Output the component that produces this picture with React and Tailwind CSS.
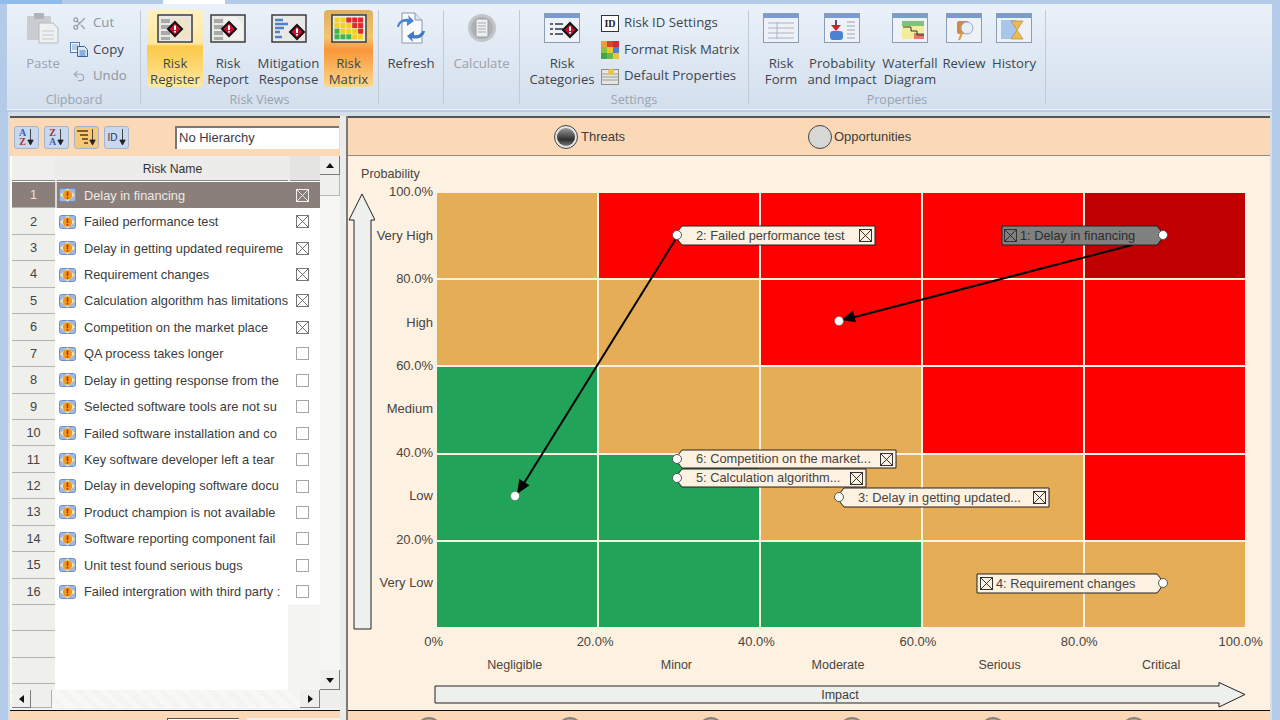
import { Scissors, Undo2 } from "lucide-react";

// names as the grid shows them, it cuts long ones off at the column edge
const risks = [
  "Delay in financing",
  "Failed performance test",
  "Delay in getting updated requireme",
  "Requirement changes",
  "Calculation algorithm has limitations",
  "Competition on the market place",
  "QA process takes longer",
  "Delay in getting response from the",
  "Selected software tools are not su",
  "Failed software installation and co",
  "Key software developer left a tear",
  "Delay in developing software docu",
  "Product champion is not available",
  "Software reporting component fail",
  "Unit test found serious bugs",
  "Failed intergration with third party :",
];

const O = "bg-[#e5ad55]";
const R = "bg-[#ff0000]";
const D = "bg-[#c00000]";
const G = "bg-[#21a35a]";
const cells = [
  O, R, R, R, D,
  O, O, R, R, R,
  G, O, O, R, R,
  G, G, O, O, R,
  G, G, G, O, O,
];

const yLabels = ["100.0%", "Very High", "80.0%", "High", "60.0%", "Medium", "40.0%", "Low", "20.0%", "Very Low"];
const xPercents = ["0%", "20.0%", "40.0%", "60.0%", "80.0%", "100.0%"];
const xLabels = ["Negligible", "Minor", "Moderate", "Serious", "Critical"];

function Diamond({ x, y, r = 7 }) {
  return (
    <g>
      <polygon points={`${x},${y - r} ${x + r},${y} ${x},${y + r} ${x - r},${y}`} fill="#c8102e" stroke="#111" strokeWidth="2" />
      <rect x={x - 1} y={y - 3.5} width="2" height="4.5" fill="#fff" />
      <rect x={x - 1} y={y + 2} width="2" height="1.5" fill="#fff" />
    </g>
  );
}

function BoxIcon({ children }) {
  return (
    <svg width="36" height="29" viewBox="0 0 36 29">
      <rect x="1" y="1" width="34" height="27" fill="#e8e8e6" stroke="#3c3c3c" strokeWidth="1.5" />
      {children}
    </svg>
  );
}

function WinIcon({ children }) {
  return (
    <svg width="36" height="30" viewBox="0 0 36 30">
      <rect x="0.5" y="0.5" width="35" height="29" fill="#eef2f7" stroke="#8b9db5" />
      <rect x="1" y="1" width="34" height="4" fill="#7a9bd0" />
      {children}
    </svg>
  );
}

function TableLines() {
  return (
    <g fill="#a9a9a5">
      <rect x="4" y="5" width="9" height="4" />
      <rect x="4" y="11" width="9" height="4" />
      <rect x="4" y="17" width="9" height="4" />
      <rect x="4" y="23" width="9" height="3" />
    </g>
  );
}

function PasteIcon() {
  return (
    <svg width="34" height="32" viewBox="0 0 34 32">
      <rect x="1" y="4" width="24" height="24" rx="1" fill="#c9cdd1" />
      <rect x="8" y="1" width="10" height="6" rx="1" fill="#b0b4b8" />
      <path d="M13 11h14l5 5v15H13z" fill="#eef0f2" stroke="#b5b9bd" />
      <path d="M16 19h12M16 23h12M16 27h12" stroke="#c7cbcf" />
    </svg>
  );
}

function CopyIcon() {
  return (
    <svg width="18" height="15" viewBox="0 0 18 15">
      <rect x="0.5" y="0.5" width="9" height="10" fill="#f4f7fb" stroke="#4f7fbe" />
      <path d="M2 3h6M2 5h6M2 7h6" stroke="#7ba0d0" />
      <path d="M7.5 4.5h7l3 3v7h-10z" fill="#dbe7f6" stroke="#2f63aa" />
      <path d="M9.5 9h6M9.5 11h6M9.5 13h6" stroke="#3f78c6" />
    </svg>
  );
}

function RefreshIcon() {
  return (
    <svg width="32" height="32" viewBox="0 0 32 32">
      <path d="M7 1h13l7 7v23H7z" fill="#f7f9fb" stroke="#8b98a8" />
      <path d="M20 1v7h7" fill="#dfe6ee" stroke="#8b98a8" />
      <path d="M2 15c1-6 6-9 12-8l-1-4 6 6-7 5 0-4c-4-1-7 1-8 5z" fill="#4a83cf" />
      <path d="M30 19c-1 6-7 9-13 7l1 4-6-6 7-5 0 4c4 1 7-1 8-4z" fill="#3f78c6" />
    </svg>
  );
}

function CalcIcon() {
  return (
    <svg width="30" height="30" viewBox="0 0 30 30">
      <circle cx="15" cy="15" r="14" fill="#c3c6c8" />
      <circle cx="15" cy="15" r="11" fill="#aeb2b5" />
      <rect x="9" y="6" width="12" height="18" rx="1" fill="#eceeef" stroke="#9a9ea2" />
      <path d="M11 10h8M11 13h8M11 16h8M11 19h8" stroke="#a8acb0" />
    </svg>
  );
}

function MatrixIcon() {
  const colors = ["#f2d21b", "#f2d21b", "#e2262e", "#e2262e", "#e2262e", "#f2d21b", "#f2d21b", "#f2d21b", "#e2262e", "#e2262e", "#3fb54a", "#f2d21b", "#f2d21b", "#f2d21b", "#e2262e", "#3fb54a", "#3fb54a", "#3fb54a", "#f2d21b", "#f2d21b"];
  return (
    <BoxIcon>
      {colors.map((c, i) => (
        <rect key={i} x={3.5 + (i % 5) * 5.9} y={3.5 + Math.floor(i / 5) * 5.6} width="5" height="5" fill={c} />
      ))}
    </BoxIcon>
  );
}

function RibbonButton({ label, label2, icon, width, tone, muted }) {
  let bg = "";
  if (tone === "yellow") bg = "bg-[linear-gradient(#fff1c0,#fde7a4_44%,#fcc94a_47%,#fdd873_75%,#fdeaa8)] rounded-sm";
  if (tone === "orange") bg = "bg-[linear-gradient(#dfae5e,#f3c672_35%,#f9963a_52%,#fdd88a)] rounded-sm";
  return (
    <div className={`${width} h-[77px] flex flex-col items-center shrink-0 ${bg}`}>
      <div className="h-[36px] flex items-center justify-center">{icon}</div>
      <div className={`mt-[9px] text-center text-[13.2px] leading-[16px] whitespace-nowrap ${muted ? "text-[#9aa2aa]" : "text-[#3d4650]"}`}>
        <div>{label}</div>
        {label2 && <div>{label2}</div>}
      </div>
    </div>
  );
}

function SmallItem({ icon, label, muted }) {
  return (
    <div className="h-[26.5px] flex items-center gap-1 whitespace-nowrap">
      <div className="w-[20px] flex justify-center">{icon}</div>
      <span className={`text-[13.2px] ${muted ? "text-[#8d959d]" : "text-[#3d4650]"}`}>{label}</span>
    </div>
  );
}

function RibbonGroup({ title, width, children }) {
  return (
    <div className={`${width} h-[94px] shrink-0 flex flex-col border-r border-[#c0cbd8]`}>
      <div className="h-[77px] flex justify-center">{children}</div>
      <div className="mt-[5px] text-center text-[12.5px] leading-[16px] text-[#98a4b2] whitespace-nowrap">{title}</div>
    </div>
  );
}

function Ribbon() {
  return (
    <div className="h-[112px] shrink-0 flex flex-col">
      <div className="h-[4px] flex bg-[#b3cbe6]">
        <div className="w-[62px] bg-[#8ebcec]" />
        <div className="w-[101px]" />
        <div className="w-[62px] bg-white" />
      </div>
      <div className="h-[106px] ml-[7px] mr-[8px] pt-[6px] pl-[1px] flex bg-[linear-gradient(#eaf1f9,#d3dfed)] border-b border-[#f2f6fa]">
        <RibbonGroup title="Clipboard" width="w-[133px]">
          <div className="flex pl-[8px] w-full">
            <RibbonButton width="w-[54px]" label="Paste" muted icon={<PasteIcon />} />
            <div className="ml-[-1px]">
              <SmallItem muted label="Cut" icon={<Scissors size={15} className="text-[#9a9ea3]" />} />
              <SmallItem label="Copy" icon={<CopyIcon />} />
              <SmallItem muted label="Undo" icon={<Undo2 size={14} className="text-[#9aa8b8]" />} />
            </div>
          </div>
        </RibbonGroup>
        <RibbonGroup title="Risk Views" width="w-[238px]">
          <div className="flex items-start pl-[6px] w-full">
            <RibbonButton width="w-[56px]" tone="yellow" label="Risk" label2="Register" icon={<BoxIcon><TableLines /><rect x="14" y="4" width="19" height="21" fill="#efe4c9" /><Diamond x={18} y={15} /></BoxIcon>} />
            <RibbonButton width="w-[50px]" label="Risk" label2="Report" icon={<BoxIcon><TableLines /><path d="M14 3h12l7 7v16H14z" fill="#f2f2f0" /><Diamond x={19} y={15} /></BoxIcon>} />
            <RibbonButton width="w-[71px]" label="Mitigation" label2="Response" icon={<BoxIcon><path d="M4 6h8M4 10h13M4 14h9M4 18h5M4 23h7" stroke="#4f82c8" strokeWidth="2.5" /><Diamond x={26} y={18} /></BoxIcon>} />
            <RibbonButton width="w-[49px]" tone="orange" label="Risk" label2="Matrix" icon={<MatrixIcon />} />
          </div>
        </RibbonGroup>
        <RibbonGroup title="" width="w-[65px]">
          <RibbonButton width="w-[60px]" label="Refresh" icon={<RefreshIcon />} />
        </RibbonGroup>
        <RibbonGroup title="" width="w-[76px]">
          <RibbonButton width="w-[70px]" muted label="Calculate" icon={<CalcIcon />} />
        </RibbonGroup>
        <RibbonGroup title="Settings" width="w-[229px]">
          <div className="flex pl-[12px] w-full">
            <RibbonButton width="w-[60px]" label="Risk" label2="Categories" icon={<WinIcon><path d="M6 11h3M11 11h8M6 16h3M11 16h8M6 21h3M11 21h8" stroke="#5c6670" strokeWidth="2" /><Diamond x={26} y={17} /></WinIcon>} />
            <div className="pl-[8px]">
              <SmallItem label="Risk ID Settings" icon={<div className="w-[18px] h-[17px] border border-[#333] bg-white flex items-center justify-center text-[10px] font-bold font-['Liberation_Serif',serif] text-[#222]">ID</div>} />
              <SmallItem label="Format Risk Matrix" icon={<svg width="18" height="18" viewBox="0 0 18 18"><rect width="6" height="6" fill="#e9a13b" /><rect x="6" width="6" height="6" fill="#d8452e" /><rect x="12" width="6" height="6" fill="#c92f3a" /><rect y="6" width="6" height="6" fill="#8fbf3f" /><rect x="6" y="6" width="6" height="6" fill="#e8c53a" /><rect x="12" y="6" width="6" height="6" fill="#4f82c8" /><rect y="12" width="6" height="6" fill="#3fa64a" /><rect x="6" y="12" width="6" height="6" fill="#6cb64a" /><rect x="12" y="12" width="6" height="6" fill="#e8c53a" /></svg>} />
              <SmallItem label="Default Properties" icon={<svg width="18" height="18" viewBox="0 0 18 18"><rect x="0.5" y="2.5" width="17" height="15" fill="#e5e5e2" stroke="#8e8e8a" /><path d="M1 7h16M1 10h16M1 13h16" stroke="#9a9a96" /><circle cx="10" cy="5" r="3" fill="#f0c43c" /></svg>} />
            </div>
          </div>
        </RibbonGroup>
        <RibbonGroup title="Properties" width="w-[297px]">
          <div className="flex items-start w-full">
            <RibbonButton width="w-[64px]" label="Risk" label2="Form" icon={<WinIcon><path d="M5 10h26M5 15h26M5 20h26M5 25h26M14 9v17" stroke="#a8b5c6" /></WinIcon>} />
            <RibbonButton width="w-[58px]" label="Probability" label2="and Impact" icon={<WinIcon><path d="M12 7v7" stroke="#222" strokeWidth="1.5" /><polygon points="7,12 17,12 12,18" fill="#c8242c" /><rect x="6" y="18" width="13" height="9" rx="3" fill="#4a83cf" /><path d="M23 9h8M23 13h8M23 17h8M23 21h8M23 25h8" stroke="#9aa4b0" /></WinIcon>} />
            <RibbonButton width="w-[78px]" label="Waterfall" label2="Diagram" icon={<WinIcon><rect x="10" y="8" width="22" height="18" fill="#f4ec9c" /><rect x="10" y="8" width="22" height="5" fill="#7fc46f" /><rect x="22" y="20" width="10" height="6" fill="#e47b6c" /><path d="M11 14h8v4h6v4h7" fill="none" stroke="#333" /></WinIcon>} />
            <RibbonButton width="w-[30px]" label="Review" icon={<WinIcon><rect x="11" y="8" width="12" height="13" rx="2" fill="#cf8a4b" /><circle cx="21" cy="15" r="6" fill="#e6eef6" stroke="#9aa8b8" /><path d="M16 20l-3 7" stroke="#d9a441" strokeWidth="2" /></WinIcon>} />
            <RibbonButton width="w-[70px]" label="History" icon={<WinIcon><rect x="5" y="7" width="15" height="19" fill="#a7c6ea" /><path d="M15 8h12l-6 9 6 9H15l6-9z" fill="#eebb4d" stroke="#b38a3a" strokeWidth="0.7" /></WinIcon>} />
          </div>
        </RibbonGroup>
      </div>
    </div>
  );
}

function XBox({ checked, tone = "gray" }) {
  const colors = {
    gray: { box: checked ? "border-[#777]" : "border-[#a5a5a5]", stroke: "#666" },
    dark: { box: "border-[#333]", stroke: "#222" },
    light: { box: "border-[#f2f2f2]", stroke: "#f2f2f2" },
  };
  return (
    <div className={`w-[13px] h-[13px] shrink-0 border ${colors[tone].box}`}>
      {checked && (
        <svg viewBox="0 0 12 12" className="w-full h-full block">
          <path d="M0 0L12 12M12 0L0 12" stroke={colors[tone].stroke} strokeWidth="1" />
        </svg>
      )}
    </div>
  );
}

function RiskIcon() {
  return (
    <svg width="17" height="14" viewBox="0 0 17 14" className="shrink-0">
      <rect x="0.5" y="0.5" width="16" height="13" rx="2" fill="#9db8e4" stroke="#6f8fc6" />
      <polygon points="8.5,0.5 16,7 8.5,13.5 1,7" fill="#f8ecb8" />
      <circle cx="8.5" cy="7" r="4.8" fill="#f09a1c" />
      <rect x="7.7" y="3.5" width="1.6" height="4.5" fill="#c0261d" />
      <rect x="7.7" y="9" width="1.6" height="1.6" fill="#c0261d" />
    </svg>
  );
}

function SortButton({ children, tone }) {
  return (
    <div className={`w-[25px] h-[23px] rounded-[3px] border border-[#a4b4cb] flex items-center justify-center gap-[1px] ${tone === "orange" ? "bg-[#f7c878]" : "bg-[#c8d8ee]"}`}>
      {children}
      <svg width="7" height="17" viewBox="0 0 7 17"><path d="M3.5 0v15M0.8 11l2.7 5 2.7-5z" stroke="#222" fill="#222" strokeWidth="0.8" /></svg>
    </div>
  );
}

function Letters({ a, b, ca, cb }) {
  return (
    <div className="flex flex-col items-center font-['Liberation_Serif',serif] font-bold text-[10px] leading-[9px]">
      <span className={ca}>{a}</span>
      <span className={cb}>{b}</span>
    </div>
  );
}

function ScrollBtn({ dir, className }) {
  const shapes = {
    up: "M0 5L4 0L8 5z",
    down: "M0 0L8 0L4 5z",
    left: "M5 0L5 8L0 4z",
    right: "M0 0L5 4L0 8z",
  };
  return (
    <div className={`bg-[#efefed] border-r border-b border-[#7d7d7d] flex items-center justify-center ${className}`}>
      <svg width="8" height="8" viewBox="0 0 8 8"><path d={shapes[dir]} fill="#111" transform={dir === "up" || dir === "down" ? "translate(0 2)" : "translate(2 0)"} /></svg>
    </div>
  );
}

function RiskList() {
  const blanks = [0, 1, 2];
  return (
    <div className="w-[330px] shrink-0 flex flex-col">
      <div className="h-[2px] bg-[#555]" />
      <div className="h-[38px] bg-[#fbd9b7] flex items-center pl-[4px] gap-[5px]">
        <SortButton><Letters a="A" b="Z" ca="text-[#3b63b5]" cb="text-[#b03030]" /></SortButton>
        <SortButton><Letters a="Z" b="A" ca="text-[#b03030]" cb="text-[#3b63b5]" /></SortButton>
        <SortButton tone="orange">
          <svg width="11" height="14" viewBox="0 0 11 14"><path d="M0 1h11M3 5h8M5 9h6M7 13h4" stroke="#7a6030" strokeWidth="2" /></svg>
        </SortButton>
        <SortButton><span className="text-[10px] text-[#26364f]">ID</span></SortButton>
        <div className="ml-[41px] w-[164px] h-[23px] bg-white border-l-2 border-t-2 border-[#777] flex items-center pl-[2px] text-[13px] text-[#3c3c3c]">No Hierarchy</div>
      </div>
      <div className="flex pl-[2px] h-[534px] bg-[#fdfdfc]">
        <div className="w-[308px] flex flex-col">
          <div className="h-[25px] flex bg-[#ececea] text-[12.2px] text-[#333] mb-[1px] gap-[2px]">
            <div className="w-[43px] border-b border-[#8a8a8a] bg-[#efefed]" />
            <div className="flex-1 pt-[2px] border-b border-[#8a8a8a] flex items-center justify-center">Risk Name</div>
            <div className="w-[30px] border-b border-[#8a8a8a] bg-[#e4e4e2]" />
          </div>
          {risks.map((name, i) => (
            <div key={i} className="flex h-[26.45px] shrink-0 text-[12.8px]">
              <div className={`w-[43px] flex items-center justify-center border-b border-[#b4b4b0] ${i === 0 ? "bg-[#8a7f7b] text-[#e6e2df]" : "bg-[#efefec] text-[#444]"}`}>{i + 1}</div>
              <div className={`w-[2px] ${i === 0 ? "bg-[#d8d8d6]" : "bg-[#fdfdfc]"}`} />
              <div className={`w-[231px] pl-[2px] flex items-center gap-[8px] whitespace-nowrap ${i === 0 ? "bg-[#8a7f7b] text-[#ece9e6]" : "bg-white text-[#3c3c3c]"}`}>
                <RiskIcon />
                <span className="w-[204px]">{name}</span>
              </div>
              <div className={`w-[32px] pr-[3px] flex items-center justify-center ${i === 0 ? "bg-[#8a7f7b]" : "bg-white"}`}>
                <XBox checked={i < 6} tone={i === 0 ? "light" : "gray"} />
              </div>
            </div>
          ))}
          {blanks.map((b) => (
            <div key={b} className="flex h-[26.45px] shrink-0">
              <div className="w-[43px] bg-[#efefec] border-b border-[#b4b4b0]" />
              <div className="w-[233px] bg-white" />
              <div className="w-[32px] bg-[#f4f4f3]" />
            </div>
          ))}
          <div className="flex-1 flex">
            <div className="w-[43px] bg-[#efefec]" />
            <div className="w-[233px] bg-white" />
            <div className="w-[32px] bg-[#f4f4f3]" />
          </div>
        </div>
        <div className="w-[20px] bg-[#f6f6f5] flex flex-col">
          <ScrollBtn dir="up" className="h-[19px]" />
          <div className="h-[21px] bg-[#efefed] border-b border-r border-[#b8b8b6]" />
          <div className="flex-1" />
          <ScrollBtn dir="down" className="h-[20px]" />
        </div>
      </div>
      <div className="h-[18px] flex pl-[2px] bg-[repeating-linear-gradient(45deg,#f1f1f0_0px,#f1f1f0_1px,#fbfbfa_1px,#fbfbfa_2px)]">
        <ScrollBtn dir="left" className="w-[19px]" />
        <div className="w-[21px] bg-[#efefed] border-r border-b border-[#b0b0ae]" />
        <div className="flex-1" />
        <ScrollBtn dir="right" className="w-[20px]" />
        <div className="w-[20px] bg-[#eeeeec]" />
      </div>
      <div className="h-[2px] bg-[#f2f2f0]" />
      <div className="h-[10px] border-t border-[#111] bg-[#fbd9b7] flex items-end pl-[157px] gap-[8px]">
        <div className="w-[72px] h-[2px] bg-white border-t border-l border-[#555]" />
        <div className="w-[93px] h-[2px] bg-[#eef2f2]" />
      </div>
    </div>
  );
}

function Overlay() {
  const dots = [[726, 42], [240, 42], [240, 266], [240, 285], [402, 304], [726, 390], [402, 128], [78, 303]];
  const shapes = [
    { points: "565,33 720,33 724,38 724,47 720,52 565,52", fill: "#808080" },
    { points: "245,33 438,33 438,52 245,52 241,47 241,38", fill: "#fdf1e1" },
    { points: "245,257 459,257 459,275 245,275 241,270 241,262", fill: "#fdf1e1" },
    { points: "245,276 429,276 429,294 245,294 241,289 241,281", fill: "#fdf1e1" },
    { points: "407,295 612,295 612,314 407,314 403,309 403,300", fill: "#fdf1e1" },
    { points: "540,381 720,381 724,386 724,395 720,400 540,400", fill: "#fdf1e1" },
  ];
  return (
    <svg width="808" height="434" viewBox="0 0 808 434" className="absolute left-0 top-0 overflow-visible">
      <path d="M695 52L410 126" stroke="#000" strokeWidth="2" />
      <polygon points="404,127 419,129.3 416,117.7" fill="#000" />
      <path d="M240 44L84 295" stroke="#000" strokeWidth="2" />
      <polygon points="80,301 92.5,292.3 82.3,285.9" fill="#000" />
      {shapes.map((s, i) => (
        <polygon key={i} points={s.points} fill={s.fill} stroke="#222" />
      ))}
      {dots.map(([x, y], i) => (
        <circle key={i} cx={x} cy={y} r="4.5" fill="#fff" stroke="#555" strokeWidth={i > 5 ? 0.5 : 1} />
      ))}
    </svg>
  );
}

function MarkerText({ pos, text }) {
  return (
    <div className={`absolute flex items-center justify-between text-[12.8px] text-[#444] whitespace-nowrap ${pos}`}>
      {text}
      <XBox checked tone="dark" />
    </div>
  );
}

function MarkerTextLeft({ pos, text, dark }) {
  return (
    <div className={`absolute flex items-center gap-[3px] text-[12.8px] whitespace-nowrap ${pos} ${dark ? "text-[#2c2c2c]" : "text-[#444]"}`}>
      <XBox checked tone="dark" />
      {text}
    </div>
  );
}

function Matrix() {
  return (
    <div className="relative w-[808px] h-[434px]">
      <div className="grid grid-cols-5 grid-rows-5 gap-[2px] w-full h-full">
        {cells.map((c, i) => (
          <div key={i} className={c} />
        ))}
      </div>
      <Overlay />
      <MarkerTextLeft pos="left-[567px] top-[33px] h-[19px]" text="1: Delay in financing" dark />
      <MarkerText pos="left-[259px] top-[33px] h-[19px] w-[176px]" text="2: Failed performance test" />
      <MarkerText pos="left-[259px] top-[257px] h-[18px] w-[197px]" text="6: Competition on the market..." />
      <MarkerText pos="left-[259px] top-[276px] h-[18px] w-[167px]" text="5: Calculation algorithm..." />
      <MarkerText pos="left-[421px] top-[295px] h-[19px] w-[188px]" text="3: Delay in getting updated..." />
      <MarkerTextLeft pos="left-[543px] top-[381px] h-[19px]" text="4: Requirement changes" />
    </div>
  );
}

function ChartPane() {
  const radios = [0, 1, 2, 3, 4, 5];
  return (
    <div className="flex-1 min-w-0 flex flex-col border-l-2 border-[#7b7b7b] text-[13px] text-[#4a4440]">
      <div className="h-[2px] bg-[#555]" />
      <div className="h-[38px] bg-[#fbd9b7] border-b border-[#8f8a82] flex items-center text-[#3c3c3c]">
        <div className="ml-[206px] w-[254px] flex items-center gap-[3px]">
          <div className="w-[24px] h-[24px] rounded-full border border-[#444] p-[2px] bg-[#e4e4e2]">
            <div className="w-full h-full rounded-full bg-[linear-gradient(#9a9a9a,#2e2e2e_65%,#777)]" />
          </div>
          <span>Threats</span>
        </div>
        <div className="flex items-center gap-[2px]">
          <div className="w-[24px] h-[24px] rounded-full border border-[#444] bg-[#d8d8d6]" />
          <span>Opportunities</span>
        </div>
      </div>
      <div className="h-[554px] bg-[#fdf1e1] flex flex-col">
        <div className="h-[37px] pl-[13px] pt-[10px] leading-[16px] text-[12.6px]">Probability</div>
        <div className="flex h-[434px]">
          <svg width="27" height="438" viewBox="0 0 27 438" className="shrink-0">
            <path d="M14 1L27 27H23V436H6V27H1z" fill="#eef0ee" stroke="#222" strokeWidth="1" />
          </svg>
          <div className="w-[58px] flex flex-col mt-[-22.5px] shrink-0">
            {yLabels.map((t) => (
              <div key={t} className="h-[43.4px] shrink-0 flex items-center justify-end whitespace-nowrap">{t}</div>
            ))}
          </div>
          <div className="ml-[4px]">
            <Matrix />
          </div>
        </div>
        <div className="flex mt-[7px] h-[16px] ml-[5px]">
          {xPercents.map((t) => (
            <div key={t} className="w-[161.4px] shrink-0 text-center leading-[16px]">{t}</div>
          ))}
        </div>
        <div className="flex mt-[7px] h-[16px] ml-[86px] text-[12.5px]">
          {xLabels.map((t) => (
            <div key={t} className="w-[161.6px] shrink-0 text-center leading-[16px]">{t}</div>
          ))}
        </div>
        <div className="relative mt-[9px] ml-[86px] w-[812px] h-[26px]">
          <svg width="812" height="26" viewBox="0 0 812 26" className="absolute left-0 top-0">
            <path d="M1 4H785V0.5L811 12.5L785 25V21H1z" fill="#eef0ee" stroke="#222" strokeWidth="1" />
          </svg>
          <div className="absolute inset-0 flex items-center justify-center text-[12.5px] text-[#3c3c3c]">Impact</div>
        </div>
      </div>
      <div className="h-[10px] border-t border-[#111] bg-[#fbd9b7] overflow-hidden flex pl-[68px] gap-[115px]">
        {radios.map((r) => (
          <div key={r} className="w-[26px] h-[26px] rounded-full shrink-0 mt-[6px] border-2 border-[#8a807a] bg-[#aaa]" />
        ))}
      </div>
    </div>
  );
}

export default function App() {
  return (
    <div className="w-[1280px] h-[720px] overflow-hidden flex flex-col bg-[#b3cbe6] font-['Liberation_Sans',sans-serif]">
      <div className="font-['Open_Sans',sans-serif]">
        <Ribbon />
      </div>
      <div className="flex-1 min-h-0 mx-[8px] pl-[2px] pr-[2px] pt-[4px] flex bg-[#d5dfea]">
        <RiskList />
        <div className="w-[6px] bg-[#ececea] shrink-0" />
        <ChartPane />
      </div>
    </div>
  );
}
